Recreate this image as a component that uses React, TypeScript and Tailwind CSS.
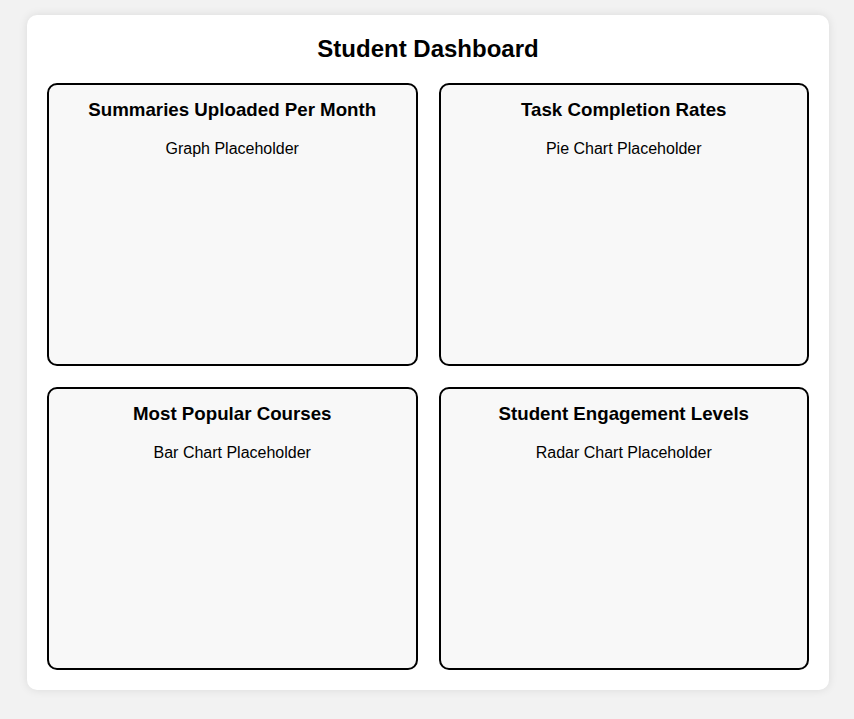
import React from "react";

const charts = [
  { title: "Summaries Uploaded Per Month", label: "Graph Placeholder" },
  { title: "Task Completion Rates", label: "Pie Chart Placeholder" },
  { title: "Most Popular Courses", label: "Bar Chart Placeholder" },
  { title: "Student Engagement Levels", label: "Radar Chart Placeholder" },
];

export default function App() {
  return (
    <div className="min-h-screen bg-[#f2f2f2] pt-[15px] pb-[29px] font-['Liberation_Sans',Arial,sans-serif] text-black">
      <div className="ml-[27px] w-[802px] rounded-[10px] bg-white px-5 pt-5 pb-5 shadow-[0_0_10px_rgba(0,0,0,0.1)]">
        <h1 className="mb-5 text-center text-2xl font-bold leading-7">
          Student Dashboard
        </h1>
        <div className="grid grid-cols-2 gap-x-[21px] gap-y-[21px]">
          {charts.map((c) => (
            <div
              key={c.title}
              className="h-[283px] rounded-[10px] border-2 border-black bg-[#f8f8f8] px-4 pt-[14px] text-center"
            >
              <h3 className="text-[18.72px] font-bold leading-[22px]">{c.title}</h3>
              <p className="mt-[19px] text-base leading-[18px]">{c.label}</p>
            </div>
          ))}
        </div>
      </div>
    </div>
  );
}
